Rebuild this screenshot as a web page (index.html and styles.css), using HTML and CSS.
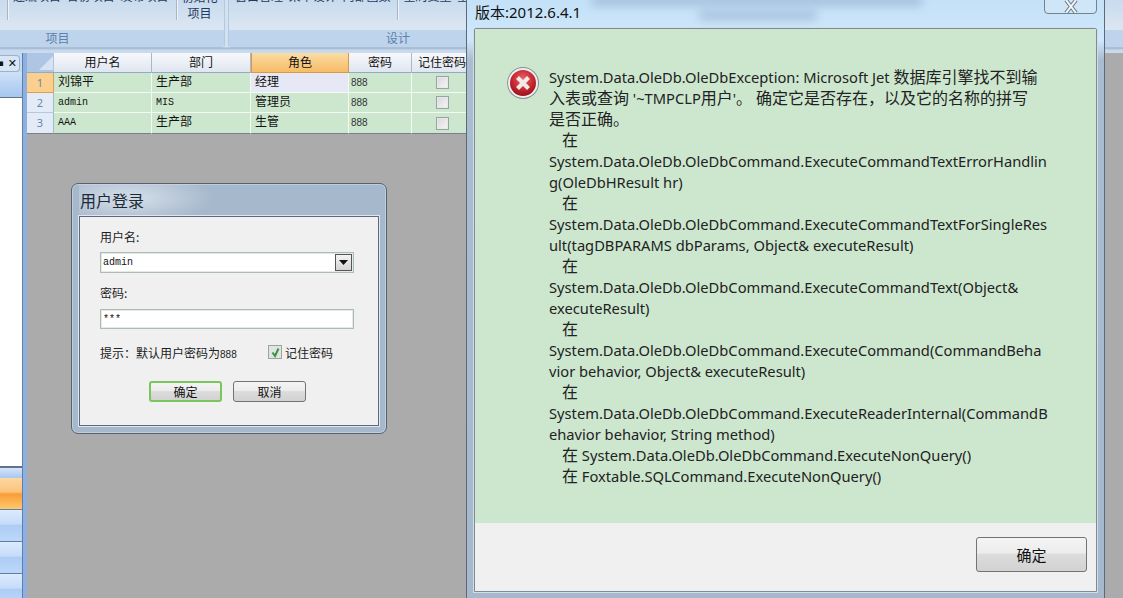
FILE: index.html
```html
<!DOCTYPE html>
<html lang="zh">
<head>
<meta charset="utf-8">
<title>用户登录</title>
<link rel="stylesheet" href="styles.css">
</head>
<body>
<div class="desk">
  <header class="ribbon">
    <section class="group group-project">
      <div class="tools">
        <span class="sep"></span>
        <span class="tool-row">连编项目 合份项目 发布项目</span>
        <span class="sep sep-b"></span>
        <span class="tool-big">初始化<br><b>项目</b></span>
      </div>
      <div class="band">项目</div>
    </section>
    <section class="group group-design">
      <div class="tools">
        <span class="tool-row tool-row-d">窗口管理 菜单设计 内部函数</span>
        <span class="sep"></span>
        <span class="tool-row">全局变量 全</span>
      </div>
      <div class="band band-d">设计</div>
    </section>
  </header>
  <div class="work">
    <aside class="side">
      <div class="side-tab"><span class="pin">▪</span><span class="close">✕</span></div>
      <div class="side-head"></div>
      <div class="side-body"></div>
      <div class="nav nav-top"></div>
      <div class="nav nav-on"></div>
      <div class="nav"></div>
      <div class="nav"></div>
      <div class="nav"></div>
    </aside>
    <div class="split"></div>
    <main class="sheet">
      <div class="grid">
        <div class="corner"><svg width="14" height="14" viewBox="0 0 14 14"><path d="M14 0V14H0Z" fill="#d6e2f1"/></svg></div>
        <div class="th">用户名</div><div class="th">部门</div><div class="th th-on">角色</div><div class="th">密码</div><div class="th th-last">记住密码</div>

        <div class="rh rh-on">1</div>
        <div class="td cjk">刘锦平</div><div class="td cjk">生产部</div><div class="td cjk td-cur">经理</div><div class="td num">888</div><div class="td chk"><i></i></div>

        <div class="rh">2</div>
        <div class="td mono">admin</div><div class="td mono">MIS</div><div class="td cjk">管理员</div><div class="td num">888</div><div class="td chk"><i></i></div>

        <div class="rh">3</div>
        <div class="td mono">AAA</div><div class="td cjk">生产部</div><div class="td cjk">生管</div><div class="td num">888</div><div class="td chk"><i></i></div>
      </div>
    </main>
  </div>

  <div class="login">
    <div class="login-title">用户登录</div>
    <form class="login-body">
      <label class="lbl">用户名:</label>
      <div class="combo"><span class="val">admin</span><span class="drop"><svg width="9" height="5" viewBox="0 0 9 5"><path d="M0 0H9L4.500 5Z" fill="#111"/></svg></span></div>
      <label class="lbl lbl-2">密码:</label>
      <div class="combo pass"><span class="val">***</span></div>
      <div class="hint-row">
        <span class="hint">提示：默认用户密码为<em>888</em></span>
        <span class="remember"><i class="tick"><svg width="11" height="11" viewBox="0 0 11 11"><path d="M2.500 5.500L5 9L8.500 1.500" fill="none" stroke="#3f8f4a" stroke-width="2"/></svg></i>记住密码</span>
      </div>
      <div class="btns">
        <button type="button" class="btn btn-ok">确定</button>
        <button type="button" class="btn">取消</button>
      </div>
    </form>
  </div>

  <div class="err">
    <div class="glass g1"></div><div class="glass g2"></div>
    <div class="err-title">版本:2012.6.4.1</div>
    <div class="err-close"><svg width="16" height="13" viewBox="0 0 16 13"><path d="M3 0L13 13M13 0L3 13" fill="none" stroke="#6f7f8e" stroke-width="4"/><path d="M3 0L13 13M13 0L3 13" fill="none" stroke="#f4f6f8" stroke-width="2"/></svg></div>
    <div class="err-panel">
      <div class="err-main">
        <svg class="err-icon" width="34" height="34" viewBox="0 0 34 34">
          <defs>
            <radialGradient id="red" cx="50%" cy="35%" r="70%">
              <stop offset="0" stop-color="#e8646a"/>
              <stop offset=".6" stop-color="#c4252d"/>
              <stop offset="1" stop-color="#8d0f16"/>
            </radialGradient>
          </defs>
          <circle cx="17" cy="17" r="16" fill="#8a8f93"/>
          <circle cx="17" cy="17" r="15" fill="#eef0f0"/>
          <circle cx="17" cy="17" r="13" fill="url(#red)"/>
          <path d="M11.500 11.500L22.500 22.500M22.500 11.500L11.500 22.500" stroke="#f2e9e9" stroke-width="4.200" stroke-linecap="butt"/>
        </svg>
        <div class="msg">
          <div>System.Data.OleDb.OleDbException: Microsoft Jet <span class="zh">数据库引擎找不到输</span></div>
          <div><span class="zh">入表或查询</span> '~TMPCLP<span class="zh">用户</span>'<span class="zh">。</span> <span class="zh">确定它是否存在，以及它的名称的拼写</span></div>
          <div><span class="zh">是否正确。</span></div>
          <div class="ind"><span class="zh">在</span></div>
          <div>System.Data.OleDb.OleDbCommand.ExecuteCommandTextErrorHandlin</div>
          <div>g(OleDbHResult hr)</div>
          <div class="ind"><span class="zh">在</span></div>
          <div>System.Data.OleDb.OleDbCommand.ExecuteCommandTextForSingleRes</div>
          <div>ult(tagDBPARAMS dbParams, Object&amp; executeResult)</div>
          <div class="ind"><span class="zh">在</span></div>
          <div>System.Data.OleDb.OleDbCommand.ExecuteCommandText(Object&amp;</div>
          <div>executeResult)</div>
          <div class="ind"><span class="zh">在</span></div>
          <div>System.Data.OleDb.OleDbCommand.ExecuteCommand(CommandBeha</div>
          <div>vior behavior, Object&amp; executeResult)</div>
          <div class="ind"><span class="zh">在</span></div>
          <div>System.Data.OleDb.OleDbCommand.ExecuteReaderInternal(CommandB</div>
          <div>ehavior behavior, String method)</div>
          <div class="ind"><span class="zh">在</span> System.Data.OleDb.OleDbCommand.ExecuteNonQuery()</div>
          <div class="ind"><span class="zh">在</span> Foxtable.SQLCommand.ExecuteNonQuery()</div>
        </div>
      </div>
      <div class="err-foot"><button type="button" class="btn btn-big">确定</button></div>
    </div>
  </div>
</div>
</body>
</html>
```
FILE: styles.css
```css
* { box-sizing: border-box; }
html, body { margin: 0; padding: 0; }
body { font-family: "Noto Sans CJK SC", "Noto Sans", sans-serif; font-size: 12px; color: #1b1b1b; overflow: hidden; }
.desk { position: relative; width: 1123px; height: 598px; overflow: hidden; background: #ababab; display: flex; flex-direction: column; }

/* ribbon */
.ribbon { flex: none; height: 53px; display: flex; gap: 3px; background: linear-gradient(#d3e2f2 0, #d3e2f2 47px, #9fb4cc 48px, #c6d8ec 50px, #c9dbee 53px); padding-bottom: 5px; }
.group { height: 48px; display: flex; flex-direction: column; overflow: hidden; }
.group-project { width: 225px; border-radius: 0 0 4px 0; border-right: 1px solid #b4c8de; }
.group-design { flex: 1; border-radius: 0 0 0 4px; border-left: 1px solid #b4c8de; }
.tools { flex: none; height: 30px; display: flex; align-items: flex-start; background: linear-gradient(#c9dbee, #dbe6f2); }
.band { flex: 1; background: #bdd4ec; color: #5d7fa9; font-size: 12px; line-height: 16px; text-align: center; border-bottom: 1px solid #aebfd3; }
.group-project .band { padding-right: 109px; }
.band-d { padding-right: 556px; }
.sep { flex: none; width: 1px; height: 20px; margin-left: 7px; background: #a6b6c7; box-shadow: 1px 0 0 #eef4fa; }
.sep-b { margin-left: 8px; }
.tool-row { flex: none; margin: -13px 0 0 5px; font-size: 12px; line-height: 17px; color: #1f3a5c; word-spacing: 3px; }
.tool-row-d { margin-left: 6px; }
.group-design .sep { margin-left: 7px; }
.tool-big { flex: none; margin: -11px 0 0 2px; width: 40px; text-align: center; font-size: 12px; line-height: 16px; color: #1f3a5c; }
.tool-big b { font-weight: 400; display: block; }

/* workspace */
.work { flex: 1; display: flex; min-height: 0; }
.side { flex: none; width: 22px; display: flex; flex-direction: column; background: #c4d9f4; }
.side-tab { flex: none; height: 17px; margin: 2px 2px 0 0; background: #d7e5f5; display: flex; justify-content: flex-end; align-items: center; border: 1px solid #9fb1c6; border-left: 0; border-radius: 0 4px 4px 0; overflow: hidden; }
.side-tab .pin, .side-tab .close { font-family: "DejaVu Sans", sans-serif; line-height: 13px; color: #111; font-weight: 700; }
.side-tab .pin { font-size: 9px; margin-right: 4px; }
.side-tab .close { font-size: 11px; margin-right: 2px; }
.side-head { flex: none; height: 25px; background: linear-gradient(#cfe1f8, #a6c6f0); }
.side-body { flex: none; height: 371px; background: #fff; border-top: 1px solid #5f7488; border-bottom: 2px solid #5f7488; }
.nav { flex: none; height: 32px; background: linear-gradient(#dcebfd 0, #c6dcf8 45%, #aecdf5 50%, #bcd7f8 100%); border-bottom: 1px solid #5f7ea8; }
.nav-top { height: 10px; background: linear-gradient(#d5e5fa, #a9c7ef); border-bottom: 0; }
.nav-on { background: linear-gradient(#fdd8a0 0, #fcc27d 45%, #fa9d35 52%, #fdc96e 100%); border-bottom: 1px solid #5f7ea8; }
.split { flex: none; width: 5px; background: linear-gradient(90deg, #5f7ea8 0, #5f7ea8 1px, #8db0e0 1px); }
.sheet { flex: 1; min-width: 0; }

/* grid */
.grid { display: grid; grid-template-columns: 27px 98px 99px 98px 63px 55px; grid-template-rows: 20px 20px 20px 21px; width: 440px; font-size: 12px; }
.corner { background: #aec5e4; display: flex; align-items: flex-end; justify-content: flex-end; padding: 0 1px 2px 0; border-bottom: 1px solid #93a9c6; }
.th { background: linear-gradient(#f7f8fb, #dfe6f1); border-right: 1px solid #a9b8cb; border-bottom: 1px solid #93a9c6; text-align: center; line-height: 17px; color: #111; }
.th-last { padding-left: 5px; border-right: 0; white-space: nowrap; overflow: hidden; }
.th-on { background: linear-gradient(#fbdca5, #f7bc66); border-color: #d79a4c; border-left: 1px solid #d79a4c; }
.rh { background: #e3ebf7; border-right: 1px solid #a4b8d2; border-bottom: 1px solid #b6c8de; color: #6a86ab; text-align: center; line-height: 19px; font-size: 11px; font-family: "Noto Sans", sans-serif; }
.rh-on { background: #fbd08e; border-color: #d6a059; }
.td { background: #cde7cf; border-right: 1px solid #f3f9f3; border-bottom: 1px solid #f3f9f3; padding-left: 4px; line-height: 15px; white-space: nowrap; color: #111; overflow: hidden; }
.grid > .td:nth-last-child(-n+5), .grid > .rh:nth-last-child(6) { border-bottom: 1px solid #78808a; }
.td-cur { background: #e6e9f5; }
.mono { font-family: "Liberation Mono", monospace; font-size: 10px; line-height: 20px; }
.num { font-family: "Liberation Sans", sans-serif; font-size: 10px; color: #333; padding-left: 2px; line-height: 19px; }
.chk { display: flex; align-items: center; justify-content: center; padding: 0 0 0 5px; border-right: 0; }
.chk i { display: block; width: 13px; height: 13px; background: linear-gradient(135deg, #d8d8d8, #f6f6f6); border: 1px solid #9aa3a3; box-shadow: inset 0 0 0 1px #e8e8e8; }

/* login window */
.login { position: absolute; left: 71px; top: 183px; width: 316px; height: 251px; border: 1px solid #59636e; border-radius: 7px; background: #a6b8cc; padding: 0 7px 7px; display: flex; flex-direction: column; box-shadow: inset 0 0 0 1px #c0cedc; }
.login-title { flex: none; height: 32px; font-size: 16px; line-height: 32px; padding-left: 1px; color: #1d2a36; background: radial-gradient(ellipse 85px 26px at 50px 14px, #ccd8e4 20%, rgba(166,184,204,0) 100%); }
.login-body { flex: 1; background: #f0f0f0; border: 1px solid #5b6b7d; box-shadow: 0 0 0 1px #dfe6ee; padding: 12px 24px 0 20px; display: flex; flex-direction: column; }
.lbl { font-size: 12px; line-height: 16px; color: #222; }
.lbl-2 { margin-top: 12px; }
.combo { flex: none; height: 21px; margin-top: 7px; background: #fff; border: 1px solid #aebbb2; box-shadow: 0 0 0 1px #e4ebe4 inset; display: flex; align-items: center; justify-content: space-between; padding-left: 2px; }
.pass { margin-top: 8px; height: 20px; }
.val { font-family: "Liberation Mono", monospace; font-size: 10px; color: #111; }
.drop { width: 17px; height: 17px; margin-right: 1px; border: 1px solid #555; background: linear-gradient(#f4f4f4, #d4d4d4); display: flex; align-items: center; justify-content: center; }
.hint-row { display: flex; align-items: center; margin-top: 15px; height: 16px; }
.hint { width: 168px; font-size: 12px; color: #222; white-space: nowrap; }
.hint em { font-style: normal; font-family: "Liberation Sans", sans-serif; font-size: 10px; }
.remember { display: flex; align-items: center; gap: 3px; font-size: 12px; color: #222; }
.tick { display: flex; align-items: center; justify-content: center; width: 14px; height: 14px; background: #dfe6df; border: 1px solid #9aa59a; }
.btns { display: flex; gap: 11px; margin: 21px 0 0 49px; }
.btn { font: inherit; font-size: 12px; color: #111; padding: 0; width: 73px; height: 21px; border: 1px solid #6f7478; border-radius: 3px; background: linear-gradient(#f4f4f4 0, #ececec 45%, #dcdcdc 50%, #d2d2d2 100%); line-height: 17px; }
.btn-ok { border: 2px solid #7cc45c; line-height: 15px; }

/* error window */
.err { position: absolute; left: 466px; top: 0; width: 639px; height: 610px; border-left: 1px solid #5c6a78; border-right: 1px solid #5c6a78; background: linear-gradient(#c4e1f8 0, #cfe8fb 40px, #a9bcd0 60px, #a6b8cc 100%); padding: 0 7px; }
.err-title { height: 28px; font-size: 15px; line-height: 25px; color: #111; padding-left: 1px; font-family: "Noto Sans", "Noto Sans CJK SC", sans-serif; position: relative; }
.glass { position: absolute; background: #8fa9c8; filter: blur(5px); opacity: .6; }
.g1 { left: 125px; top: -4px; width: 330px; height: 10px; }
.g2 { left: 232px; top: 11px; width: 118px; height: 9px; }
.err-close { position: absolute; left: 577px; top: -3px; width: 53px; height: 17px; border: 1px solid #75818d; border-radius: 0 0 4px 4px; background: #cfe6f9; display: flex; justify-content: center; align-items: flex-end; overflow: hidden; }
.err-panel { height: 564px; width: 623px; border: 1px solid #7d8b98; border-radius: 2px 2px 0 0; background: #f0f0f0; display: flex; flex-direction: column; box-shadow: 0 0 0 1px #d4dde7; }
.err-main { flex: none; height: 494px; background: #cde7cf; display: flex; align-items: flex-start; padding: 37px 0 0 31px; }
.err-icon { flex: none; }
.msg { margin: 1px 0 0 9px; width: 545px; font-family: "Noto Sans", "Noto Sans CJK SC", sans-serif; font-size: 14.7px; line-height: 21px; color: #222; white-space: nowrap; }
.msg > div { height: 21px; }
.zh { font-size: 16px; line-height: 1; }
.ind { padding-left: 13px; }
.err-foot { flex: 1; display: flex; justify-content: flex-end; align-items: flex-start; padding: 14px 9px 0 0; }
.btn-big { width: 111px; height: 35px; font-size: 15px; border-radius: 3px; }
```
